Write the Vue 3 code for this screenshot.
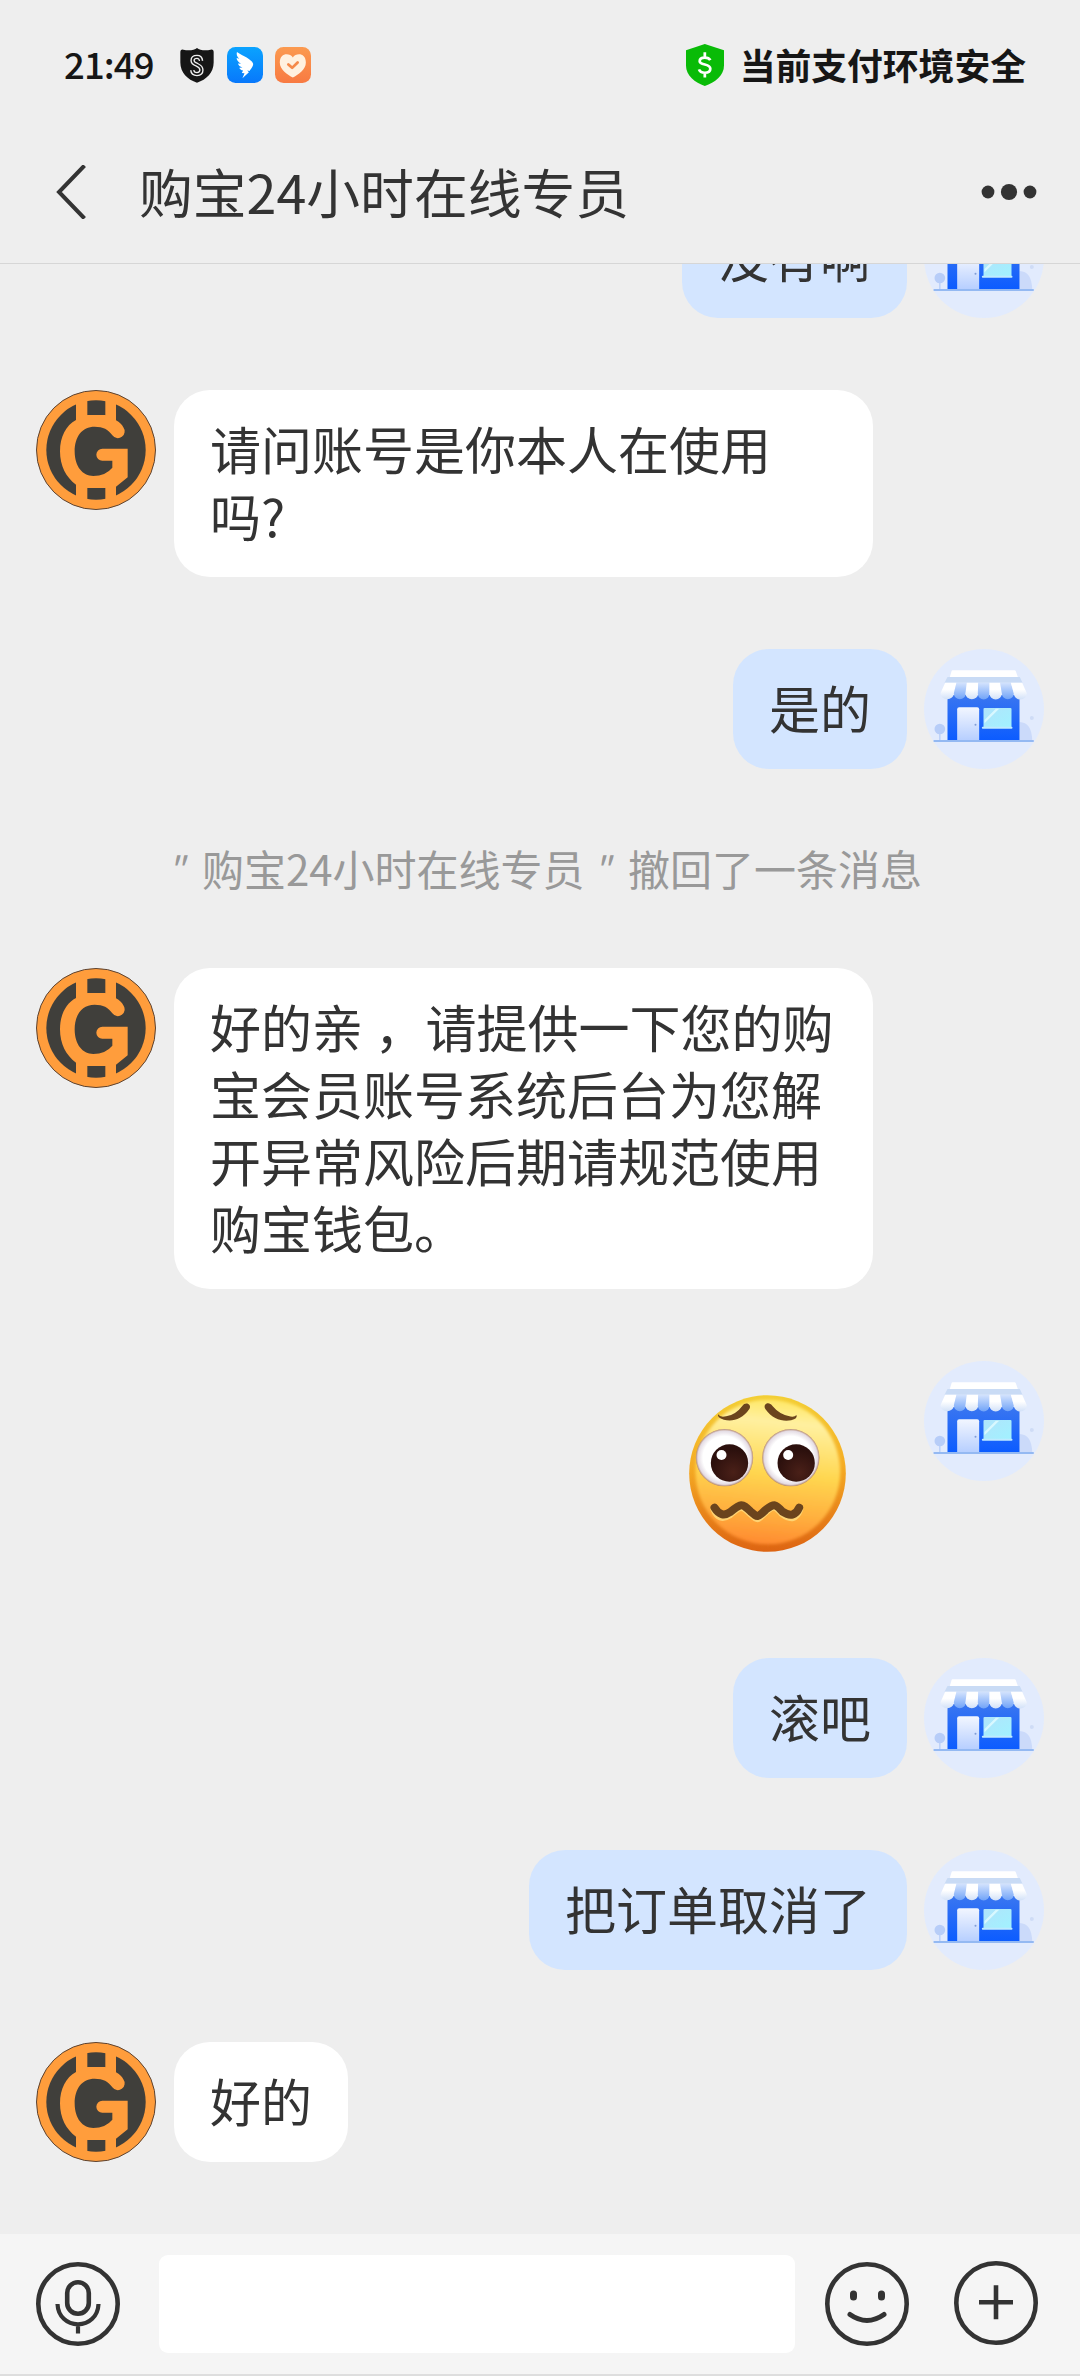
<script setup>
const messages = [
  { from: 'me', text: '没有啊' },
  { from: 'agent', text: '请问账号是你本人在使用吗?' },
  { from: 'me', text: '是的' },
  { from: 'notice', name: '购宝24小时在线专员', text: '撤回了一条消息' },
  { from: 'agent', text: '好的亲 ，请提供一下您的购宝会员账号系统后台为您解开异常风险后期请规范使用购宝钱包。' },
  { from: 'me', emoji: true },
  { from: 'me', text: '滚吧' },
  { from: 'me', text: '把订单取消了' },
  { from: 'agent', text: '好的' },
]
</script>

<template>
  <div class="screen">
    <div class="status">
      <span class="time">21:49</span>
      <svg class="s-shield" viewBox="522 142 100 106" preserveAspectRatio="none">
        <path fill="#161616" d="M572 142C580 150 600 150 612 147Q621 145 621 155V186C621 216 600 238 572 247C544 238 523 216 523 186V155Q523 145 532 147C544 150 564 150 572 142Z" />
        <path fill="none" stroke="#eee" stroke-width="13" d="M584 181Q583 169 572 169Q559 169 559 180Q559 188 572 193Q585 199 585 209Q585 221 572 221Q559 221 558 209" />
        <path fill="none" stroke="#161616" stroke-width="5" d="M584 183Q583 169 572 169Q559 169 559 180Q559 188 572 193Q585 199 585 209Q585 221 572 221Q559 221 558 207" />
      </svg>
      <svg class="s-app" viewBox="659 141 105 107" preserveAspectRatio="none">
        <defs><linearGradient id="ding" x2="0" y2="1"><stop stop-color="#0aa3ff" /><stop offset="1" stop-color="#0878fb" /></linearGradient></defs>
        <rect x="659" y="141" width="105" height="107" rx="25" fill="url(#ding)" />
        <path fill="#fff" d="M688 156C706 168 730 177 735 190C737 197 729 206 725 212L718 211L723 216L704 234L710 219L702 218L706 211C700 211 696 207 695 203L704 202C697 200 692 195 691 190L700 191C692 186 687 180 687 174L695 176C688 170 686 163 688 156Z" />
      </svg>
      <svg class="s-app" viewBox="799 141 105 107" preserveAspectRatio="none">
        <defs><linearGradient id="heart" x2="0" y2="1"><stop stop-color="#fb9a50" /><stop offset="1" stop-color="#f87a42" /></linearGradient></defs>
        <rect x="799" y="141" width="105" height="107" rx="25" fill="url(#heart)" />
        <path fill="#fff1df" d="M851 172C842 158 813 157 813 187C813 209 836 223 851 232C866 223 889 209 889 187C889 157 860 158 851 172Z" />
        <path fill="none" stroke="#f58a4a" stroke-width="8" stroke-linecap="round" stroke-linejoin="round" d="M838 193L849 203L865 187" />
      </svg>
      <svg class="s-safe" viewBox="424 128 111 127" preserveAspectRatio="none">
        <path fill="#09bb07" d="M479 128L535 147V193C535 224 508 245 479 255C450 245 424 224 424 193V147Z" />
        <path fill="none" stroke="#fff" stroke-width="8" d="M495 177Q491 169 479 169Q464 169 464 180Q464 187 479 190Q495 194 495 203Q495 215 479 215Q465 215 462 205M479 153V170M479 214V229" />
      </svg>
      <span class="safe">当前支付环境安全</span>
    </div>

    <header class="header">
      <svg class="back" viewBox="0 0 32 54"><path d="M29.500 0.500L4 27L29.500 53.500" fill="none" stroke="#333" stroke-width="4" /></svg>
      <h1>购宝24小时在线专员</h1>
      <svg class="more" viewBox="0 0 56 18" fill="#333"><circle cx="7" cy="9" r="6.400" /><circle cx="28" cy="9" r="8.100" /><circle cx="49" cy="9" r="6.400" /></svg>
    </header>

    <main class="chat">
      <div v-for="(m, i) in messages" :key="i" class="row" :class="m.from">
        <template v-if="m.from === 'notice'">
          <i>"</i><span class="name">{{ m.name }}</span><i>"</i><span class="action">{{ m.text }}</span>
        </template>
        <template v-else>
          <svg v-if="m.from === 'agent'" class="avatar" viewBox="48 60 360 360">
            <circle cx="228" cy="240" r="178.500" fill="#ff9d3c" stroke="#5c4332" stroke-width="3" />
            <circle cx="228" cy="240" r="149" fill="#403f3b" />
            <g fill="#ff9d3c">
              <path d="M168 80H202V165H168ZM256 80H288V165H256ZM168 330H202V400H168ZM256 330H288V400H256Z" />
              <path d="M202 135H256L288 151Q304 160 310 172A19 19 0 1 1 277 196C264 178 250 170 224 170C186 170 164 200 164 244C164 290 188 318 220 318Q256 318 277 293V272H247A18 18 0 0 1 247 236H323V322L288 350L256 354H202L168 344C138 322 120 288 120 244C120 200 138 166 168 150Z" />
            </g>
          </svg>

          <div v-if="m.emoji" class="sticker">
            <svg viewBox="85 167 470 471">
              <defs>
                <linearGradient id="rim" x2="0" y2="1"><stop stop-color="#f3cf35" /><stop offset=".45" stop-color="#f5ac24" /><stop offset="1" stop-color="#dd6412" /></linearGradient>
                <linearGradient id="face" x1=".55" x2=".45" y2="1"><stop stop-color="#ffe765" /><stop offset=".15" stop-color="#fff0a0" /><stop offset=".5" stop-color="#ffd750" /><stop offset=".78" stop-color="#ffb03e" /><stop offset="1" stop-color="#ff8a30" /></linearGradient>
                <radialGradient id="eye"><stop offset=".75" stop-color="#fff" /><stop offset=".93" stop-color="#e4dce4" /><stop offset="1" stop-color="#b58a70" /></radialGradient>
                <radialGradient id="pupil" cx=".6" cy=".75" r=".6"><stop stop-color="#4a2018" /><stop offset="1" stop-color="#2c100d" /></radialGradient>
                <filter id="soft" x="-10%" y="-10%" width="120%" height="120%"><feGaussianBlur stdDeviation="5" /></filter>
              </defs>
              <circle cx="320" cy="402.500" r="235" fill="url(#rim)" />
              <circle cx="321" cy="398" r="217" fill="url(#face)" filter="url(#soft)" />
              <g fill="url(#eye)"><circle cx="191" cy="355" r="86" /><circle cx="390" cy="355" r="86" /></g>
              <g fill="url(#pupil)"><circle cx="206" cy="371" r="56" /><circle cx="406" cy="371" r="56" /></g>
              <g fill="#fff"><circle cx="182" cy="347" r="15" /><circle cx="382" cy="347" r="15" /></g>
              <g fill="#6b441d">
                <path d="M172 225Q177 235 196 231Q225 226 245 199C254 185 275 195 265 210C244 241 213 248 189 241Q168 235 172 225Z" />
                <path d="M407 227Q400 235 383 230Q355 224 335 200C325 184 304 193 314 210C335 240 365 248 391 243Q411 238 407 227Z" />
              </g>
              <path transform="translate(0 5)" d="M161 505Q175 540 205 521C238 492 242 490 270 517C291 537 288 537 312 513C340 489 345 493 365 517Q402 545 415 505" fill="none" stroke="#ffe58a" stroke-opacity=".7" stroke-width="24" stroke-linecap="round" />
              <path d="M161 505Q181 537 207 519C243 490 243 492 270 517C291 535 290 535 315 511C341 491 345 495 365 517Q400 540 415 505" fill="none" stroke="#6b441d" stroke-width="24" stroke-linecap="round" />
            </svg>
          </div>
          <div v-else class="bubble">{{ m.text }}</div>

          <svg v-if="m.from === 'me'" class="avatar" viewBox="40.500 27 360 360">
            <defs>
              <linearGradient id="wall" x2="0" y2="1"><stop stop-color="#3a76f0" /><stop offset="1" stop-color="#0c5cff" /></linearGradient>
              <linearGradient id="door" x2="0" y2="1"><stop stop-color="#f2f6ff" /><stop offset="1" stop-color="#b7cfff" /></linearGradient>
              <linearGradient id="glass" x2="1" y2="1"><stop stop-color="#b0e4fb" /><stop offset="1" stop-color="#a1f2ff" /></linearGradient>
              <linearGradient id="blueStripe" x2="0" y2="1"><stop stop-color="#d4e3fd" /><stop offset="1" stop-color="#70a3f8" /></linearGradient>
              <linearGradient id="whiteStripe" x2="0" y2="1"><stop offset=".4" stop-color="#fff" /><stop offset="1" stop-color="#d2e1f8" /></linearGradient>
            </defs>
            <circle cx="220.500" cy="207" r="180" fill="#e2ebfd" />
            <path d="M327 300V246Q364 248 365 300Z" fill="#cbdafa" />
            <circle cx="88" cy="267" r="16" fill="#b7cdf8" /><path d="M88 270V300" stroke="#b7cdf8" stroke-width="4" />
            <circle cx="364" cy="234" r="6" fill="#cfdcf6" />
            <path d="M111 165H327V300H111Z" fill="url(#wall)" />
            <path d="M111 111H328L336 128H102Z" fill="#c9dbf5" />
            <path d="M126 91H312Q315 91 316 94L322 111H118L123 94Q124 91 126 91Z" fill="#fff" />
            <path d="M104 128H138L130 160A20 18 0 0 1 90 160Z" fill="url(#whiteStripe)" />
            <path d="M138 128H169L166 160A18 18 0 0 1 130 160Z" fill="url(#blueStripe)" />
            <path d="M169 128H203V160A19 18 0 0 1 165 160Z" fill="url(#whiteStripe)" />
            <path d="M203 128H237V160A17 18 0 0 1 202 160Z" fill="url(#blueStripe)" />
            <path d="M237 128H269L274 160A18 18 0 0 1 237 160Z" fill="url(#whiteStripe)" />
            <path d="M269 128H301L310 160A18 18 0 0 1 274 160Z" fill="url(#blueStripe)" />
            <path d="M301 128H335L349 160A19 18 0 0 1 310 160Z" fill="url(#whiteStripe)" />
            <path d="M140 300V208Q140 202 146 202H200Q206 202 206 208V300Z" fill="url(#door)" />
            <circle cx="195" cy="254" r="3" fill="#7f9dd8" />
            <rect x="219" y="204" width="84" height="60" rx="3" fill="url(#glass)" />
            <path d="M222 240L256 206H266L222 250Z" fill="#e3fbff" opacity=".8" />
            <rect x="214" y="260" width="92" height="6" rx="3" fill="#bfeaff" />
            <path d="M71 303H368" stroke="#7ba9ee" stroke-width="5" stroke-linecap="round" />
          </svg>
        </template>
      </div>
    </main>

    <footer class="bar">
      <svg class="tool" viewBox="0 0 84 84">
        <circle cx="42" cy="42" r="39.700" /><rect x="31.200" y="20.300" width="21.600" height="31.400" rx="10.800" />
        <path d="M21.500 42C22 54.500 31 62.300 42 62.300S62 54.500 62.500 42M42 62V71.500" stroke-width="4.200" />
      </svg>
      <div class="input"></div>
      <svg class="tool smile" viewBox="0 0 84 84">
        <circle cx="42" cy="42" r="39.700" />
        <path d="M28.500 32V35M56.500 32V35" stroke-width="7" stroke-linecap="round" />
        <path d="M25 52.500Q42 64.500 59 52.500" stroke-width="5" stroke-linecap="round" />
      </svg>
      <svg class="tool plus" viewBox="0 0 84 84">
        <circle cx="42" cy="42" r="39.700" /><path d="M25 41.200H59M42 24.200V58.200" />
      </svg>
    </footer>
  </div>
</template>

<style>
body { margin: 0; background: #eee; }
</style>

<style scoped>
.screen {
  width: 1080px;
  height: 2376px;
  display: flex;
  flex-direction: column;
  overflow: hidden;
  background: #eee;
  color: #333;
  font-family: "Noto Sans CJK SC", sans-serif;
}
svg { display: block; flex: none; }
.status {
  height: 130px;
  flex: none;
  display: flex;
  align-items: center;
  padding: 0 54px 0 64px;
  color: #161616;
  white-space: nowrap;
}
.time { width: 116px; font-size: 36.500px; font-weight: 500; line-height: 50px; letter-spacing: -0.900px; margin-bottom: 3px; }
.s-shield { width: 34px; height: 35px; margin-right: 13px; }
.s-app { width: 36px; height: 36px; margin-right: 12px; }
.s-safe { width: 38px; height: 42px; margin: 0 16px 0 auto; }
.safe { font-size: 35.800px; font-weight: 700; line-height: 50px; margin-bottom: 2px; }
.header {
  height: 133px;
  flex: none;
  display: flex;
  align-items: center;
  padding: 0 43px 0 55px;
  border-bottom: 1px solid #d6d6d6;
}
.back { width: 32px; height: 54px; margin-bottom: 9px; }
h1 { margin: 0 auto 11px 52px; font-size: 53.800px; line-height: 76px; font-weight: 400; }
.more { width: 56px; height: 18px; margin-bottom: 9px; }
.chat {
  flex: 1;
  min-height: 0;
  display: flex;
  flex-direction: column;
  justify-content: flex-end;
  gap: 72px;
  padding: 0 36px 72px;
  overflow: hidden;
}
.row { display: flex; flex: none; align-items: flex-start; gap: 18px; }
.row.me { justify-content: flex-end; }
.avatar { width: 120px; height: 120px; }
.bubble {
  box-sizing: border-box;
  max-width: 699px;
  padding: 25px 36px 28px;
  border-radius: 36px;
  background: #fff;
  font-size: 51px;
  line-height: 67px;
}
.me .bubble { background: #d3e5ff; }
.me .avatar { margin-left: -1px; }
.sticker { width: 225px; height: 225px; margin-right: 27px; display: grid; place-items: center; }
.sticker svg { width: 157px; height: 157px; }
.row.notice { height: 55px; gap: 0; padding-left: 131px; font-size: 42px; line-height: 53px; color: #999; white-space: nowrap; }
.notice i { font-size: 36px; width: 30px; }
.notice .name { width: 391px; margin-left: 5px; }
.notice .action { margin-left: 5px; }
.bar {
  box-sizing: border-box;
  height: 142px;
  flex: none;
  display: flex;
  align-items: center;
  padding: 0 42px 0 36px;
  background: #f5f5f5;
  border-bottom: 2px solid #dedede;
}
.tool { width: 84px; height: 84px; fill: none; stroke: #333; stroke-width: 4.600; }
.input { flex: 1; height: 98px; margin: 0 30px 0 39px; border-radius: 9px; background: #fff; }
.plus { margin: 0 0 2px 45px; }
</style>
